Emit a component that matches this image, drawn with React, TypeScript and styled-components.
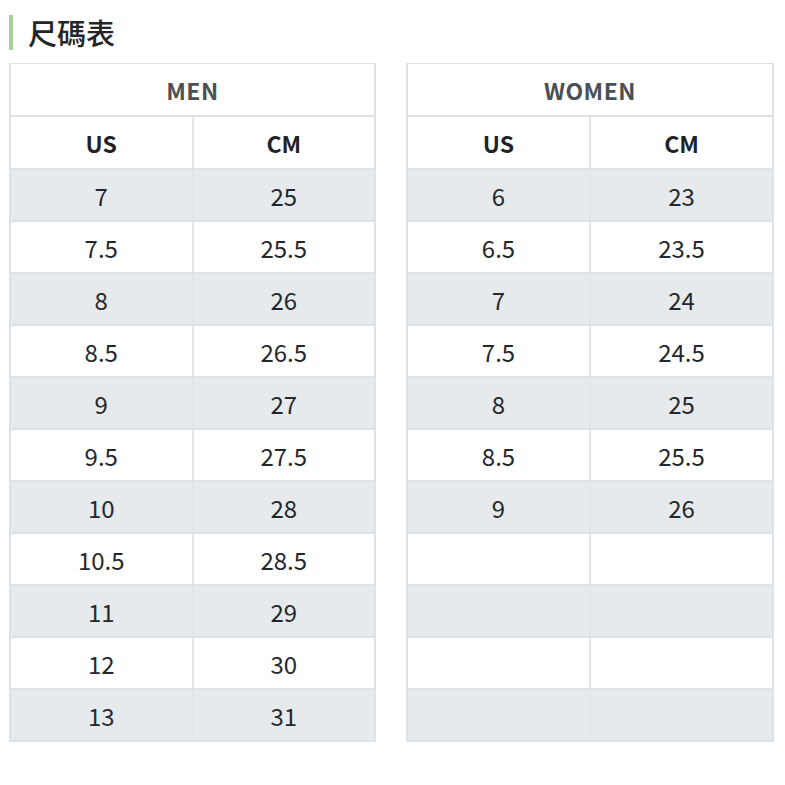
import React from 'react';
import styled, { createGlobalStyle } from 'styled-components';

type SizeRow = [string, string];

const menSizes: SizeRow[] = [
  ['7', '25'],
  ['7.5', '25.5'],
  ['8', '26'],
  ['8.5', '26.5'],
  ['9', '27'],
  ['9.5', '27.5'],
  ['10', '28'],
  ['10.5', '28.5'],
  ['11', '29'],
  ['12', '30'],
  ['13', '31'],
];

const womenSizes: SizeRow[] = [
  ['6', '23'],
  ['6.5', '23.5'],
  ['7', '24'],
  ['7.5', '24.5'],
  ['8', '25'],
  ['8.5', '25.5'],
  ['9', '26'],
  ['', ''],
  ['', ''],
  ['', ''],
  ['', ''],
];

const GlobalStyle = createGlobalStyle`
  body {
    margin: 0;
    background: #ffffff;
    font-family: "Noto Sans CJK TC", "Noto Sans", sans-serif;
    color: #24282c;
  }
`;

const Page = styled.div`
  padding: 15px 0 0 9px;
`;

const Title = styled.h2`
  display: flex;
  align-items: center;
  height: 35px;
  margin: 0 0 13px;
  padding-left: 15px;
  border-left: 4px solid #a9d096;
  font-size: 29px;
  font-weight: 500;
  line-height: 35px;
  color: #222629;
`;

const Tables = styled.div`
  display: grid;
  grid-template-columns: 367px 368px;
  column-gap: 30px;
  align-items: start;
`;

const Table = styled.table`
  width: 100%;
  border-collapse: collapse;
  table-layout: fixed;
  border: 2px solid #dfe1e3;
  border-top-width: 1px;
`;

const GroupCell = styled.th`
  height: 51px;
  padding: 0;
  font-size: 23px;
  font-weight: 700;
  letter-spacing: 0.5px;
  color: #4a5055;
  border-bottom: 2px solid #dfe2e4;
`;

const Row = styled.tr<{ $shaded?: boolean }>`
  background: ${({ $shaded }) => ($shaded ? '#e7eaec' : '#ffffff')};
`;

const HeadCell = styled.th`
  height: 51px;
  padding: 0;
  font-size: 23px;
  font-weight: 700;
  color: #1f2327;
  border-bottom: 2px solid #dfe2e4;

  & + & {
    border-left: 2px solid #e2e4e6;
  }
`;

const Cell = styled.td`
  height: 50px;
  padding: 0;
  text-align: center;
  font-size: 24px;
  font-weight: 400;
  color: #24282c;
  border-bottom: 2px solid #dfe2e4;

  & + & {
    border-left: 2px solid #e2e4e6;
  }
`;

const SizeTable = ({ label, rows }: { label: string; rows: SizeRow[] }) => (
  <Table>
    <thead>
      <tr>
        <GroupCell colSpan={2}>{label}</GroupCell>
      </tr>
      <tr>
        <HeadCell>US</HeadCell>
        <HeadCell>CM</HeadCell>
      </tr>
    </thead>
    <tbody>
      {rows.map(([us, cm], i) => (
        <Row key={i} $shaded={i % 2 === 0}>
          <Cell>{us}</Cell>
          <Cell>{cm}</Cell>
        </Row>
      ))}
    </tbody>
  </Table>
);

export default function App() {
  return (
    <Page>
      <GlobalStyle />
      <Title>尺碼表</Title>
      <Tables>
        <SizeTable label="MEN" rows={menSizes} />
        <SizeTable label="WOMEN" rows={womenSizes} />
      </Tables>
    </Page>
  );
}
